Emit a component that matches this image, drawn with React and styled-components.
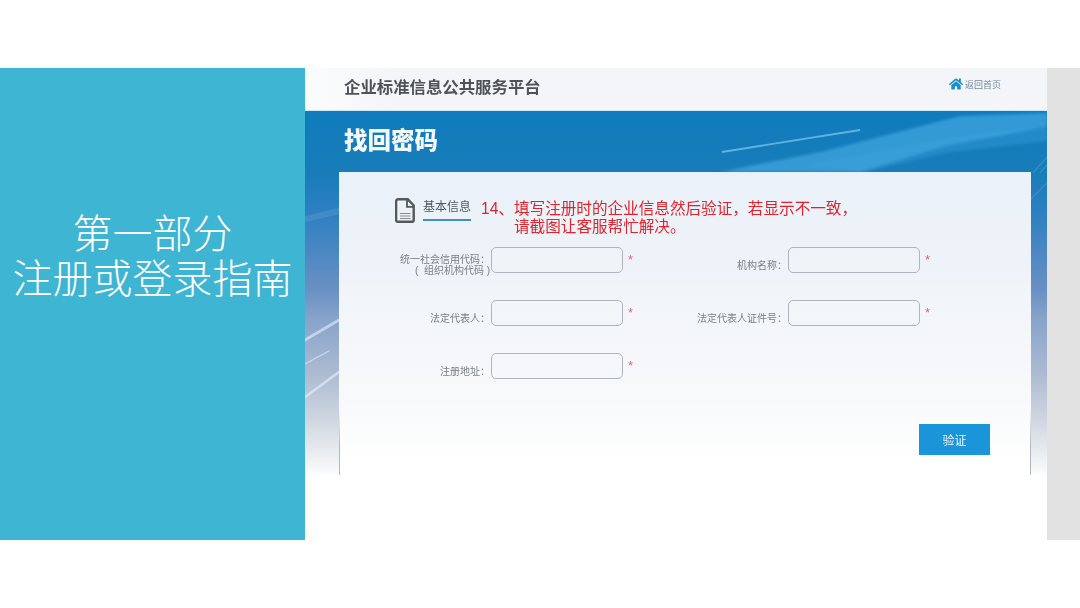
import React from "react";
import styled, { createGlobalStyle } from "styled-components";
import { FaHome } from "react-icons/fa";

const GlobalStyle = createGlobalStyle`
  html, body {
    margin: 0;
    padding: 0;
    background: #fff;
  }
  body {
    font-family: "Liberation Sans", "Noto Sans CJK SC", sans-serif;
  }
`;

const Page = styled.div`
  width: 1080px;
  height: 608px;
  padding-top: 68px;
  box-sizing: border-box;
  overflow: hidden;
  background: #fff;
`;
const Slide = styled.div`
  display: flex;
  height: 472px;
`;
const SidePanel = styled.div`
  width: 305px;
  display: flex;
  flex-direction: column;
  align-items: center;
  justify-content: center;
  padding-bottom: 94px;
  box-sizing: border-box;
  background: #3db5d3;
  color: #fff;
  font-size: 40px;
  font-weight: 300;
  line-height: 45px;
  text-align: center;
  white-space: nowrap;
`;
const Screen = styled.div`
  width: 742px;
  display: flex;
  flex-direction: column;
  filter: blur(0.35px);
`;
const Gutter = styled.div`
  flex: 1;
  background: #e2e2e3;
`;
const TopBar = styled.div`
  height: 43px;
  box-sizing: border-box;
  display: flex;
  align-items: center;
  justify-content: space-between;
  padding: 0 46px 0 39px;
  background: linear-gradient(90deg, #fbfcfd 0, #f3f5f8 12%, #f3f5f8 100%);
  border-bottom: 1px solid #cfe5f1;
`;
const Brand = styled.div`
  font-size: 16.4px;
  font-weight: 700;
  color: #4f5358;
  margin-bottom: 7px;
`;
const HomeLink = styled.div`
  display: flex;
  align-items: center;
  gap: 2px;
  margin-bottom: 10px;
  font-size: 9px;
  color: #6f8a9e;
  svg {
    color: #178fc9;
    font-size: 14px;
  }
`;
const Hero = styled.div`
  position: relative;
  flex: 1;
  display: flex;
  flex-direction: column;
  padding: 0 16px 65px 34px;
  overflow: hidden;
  background: linear-gradient(
    180deg,
    #0f7cbd 0,
    #187cb9 61px,
    #2e80c1 104px,
    #6a90c4 179px,
    #88a4cb 209px,
    #aab9d0 259px,
    #cfd6e0 309px,
    #f4f5f7 355px,
    #fff 366px
  );
`;
const Streaks = styled.svg`
  position: absolute;
  inset: 0;
  width: 742px;
  height: 429px;
`;
const HeroTitle = styled.h1`
  position: relative;
  margin: 0;
  height: 61px;
  padding: 14px 0 0 5px;
  box-sizing: border-box;
  font-size: 23.5px;
  line-height: 33px;
  font-weight: 900;
  color: #f4f8fb;
`;
const Card = styled.div`
  position: relative;
  height: 303px;
  box-sizing: border-box;
  display: flex;
  flex-direction: column;
  border-style: solid;
  border-width: 0 1px;
  border-image: linear-gradient(180deg, transparent 78%, #b4b7bc 90%) 1;
  background: linear-gradient(
    180deg,
    #e4f1f9 0,
    #eaf1f8 2px,
    #eef3f9 90px,
    #f2f5f9 130px,
    #f8f9fb 230px,
    #fff 290px
  );
`;
const Heading = styled.div`
  display: flex;
  align-items: flex-start;
  padding: 26px 0 0 55px;
  height: 75px;
  box-sizing: border-box;
`;
const DocIcon = styled.svg`
  width: 20px;
  height: 25px;
  flex: none;
`;
const SectionName = styled.div`
  width: 48px;
  height: 19px;
  margin: 2px 10px 0 8px;
  border-bottom: 2px solid #3c93c2;
  font-size: 12px;
  line-height: 15px;
  color: #55595e;
  white-space: nowrap;
`;
const Note = styled.div`
  color: #e0242e;
  font-size: 15.6px;
  line-height: 18px;
  margin-top: 2px;
  white-space: nowrap;
`;
const NoteLine = styled.div`
  padding-left: ${(props) => props.$indent || 0}px;
`;
const Form = styled.div`
  display: grid;
  grid-template-columns: 297px 297px;
  row-gap: 27px;
`;
const Field = styled.div`
  display: flex;
  align-items: center;
  height: 26px;
`;
const Label = styled.div`
  width: 150px;
  margin-right: 1px;
  padding-top: 10px;
  text-align: right;
  font-size: 10px;
  line-height: 11px;
  color: #7a7f84;
  white-space: nowrap;
`;
const Input = styled.div`
  width: 132px;
  height: 26px;
  box-sizing: border-box;
  border: 1px solid #b0b5bd;
  border-radius: 5px;
  background: rgba(246, 248, 251, 0.2);
`;
const Star = styled.span`
  margin-left: 5px;
  padding-bottom: 1px;
  font-size: 13px;
  line-height: 13px;
  color: #e8637a;
`;
const Actions = styled.div`
  display: flex;
  justify-content: flex-end;
  padding: 45px 40px 0 0;
`;
const Verify = styled.div`
  width: 71px;
  height: 31px;
  display: flex;
  align-items: center;
  justify-content: center;
  background: #1b95d9;
  color: #eef7fc;
  font-size: 12px;
`;

const fields = [
  { label: ["统一社会信用代码：", "(\u00a0\u00a0组织机构代码\u00a0)"] },
  { label: ["机构名称："] },
  { label: ["法定代表人："] },
  { label: ["法定代表人证件号："] },
  { label: ["注册地址："] },
];

const App = () => {
  return (
    <Page>
      <GlobalStyle />
      <Slide>
        <SidePanel>
          <div>第一部分</div>
          <div>注册或登录指南</div>
        </SidePanel>
        <Screen>
          <TopBar>
            <Brand>企业标准信息公共服务平台</Brand>
            <HomeLink>
              <FaHome />
              返回首页
            </HomeLink>
          </TopBar>
          <Hero>
            <Streaks viewBox="0 0 742 429">
              <defs>
                <filter id="soft" x="-10%" y="-30%" width="120%" height="160%">
                  <feGaussianBlur stdDeviation="1.6" />
                </filter>
              </defs>
              <path
                d="M415 61 L520 40 L655 5 L742 2 L742 16 L640 35 L555 61 Z"
                fill="#4fb4ea"
                opacity=".55"
                filter="url(#soft)"
              />
              <path d="M500 54 L660 24 L742 16 L742 30 L640 42 L560 61 Z" fill="#3fa6e0" opacity=".35" filter="url(#soft)" />
              <path d="M417 41 L555 19" stroke="#7cc4ee" strokeWidth="1.8" opacity=".75" fill="none" />
              <path d="M728 62 L742 46 M735 62 L742 54 M726 88 L742 72" stroke="#a9cdea" strokeWidth="1.2" opacity=".22" fill="none" />
              <g fill="none" stroke="#e6eef7" strokeLinecap="round">
                <path d="M0 229 L34 209" strokeWidth="3" opacity=".6" />
                <path d="M0 253 L24 240" strokeWidth="1.4" opacity=".6" />
                <path d="M0 286 L34 261" strokeWidth="2.6" opacity=".65" />
                <path d="M0 108 L34 100" strokeWidth="6" opacity=".1" />
              </g>
            </Streaks>
            <HeroTitle>找回密码</HeroTitle>
            <Card>
              <Heading>
                <DocIcon viewBox="0 0 20 25">
                  <path
                    d="M3 1.3h9.8l5.9 6.2v14.4a1.9 1.9 0 0 1-1.9 1.9H3a1.9 1.9 0 0 1-1.9-1.9V3.2A1.9 1.9 0 0 1 3 1.3z"
                    fill="#eef2f7"
                    stroke="#55585c"
                    strokeWidth="2.4"
                  />
                  <path d="M12 2v6.8h6.4" fill="none" stroke="#55585c" strokeWidth="1.8" />
                  <path d="M5 15.5h10.5M5 18h10.5M5 20.5h10.5" stroke="#85888d" strokeWidth="1" />
                </DocIcon>
                <SectionName>基本信息</SectionName>
                <Note>
                  <NoteLine>14、填写注册时的企业信息然后验证，若显示不一致，</NoteLine>
                  <NoteLine $indent={33}>请截图让客服帮忙解决。</NoteLine>
                </Note>
              </Heading>
              <Form>
                {fields.map((field) => (
                  <Field key={field.label[0]}>
                    <Label>
                      {field.label.map((line) => (
                        <div key={line}>{line}</div>
                      ))}
                    </Label>
                    <Input />
                    <Star>*</Star>
                  </Field>
                ))}
              </Form>
              <Actions>
                <Verify>验证</Verify>
              </Actions>
            </Card>
          </Hero>
        </Screen>
        <Gutter />
      </Slide>
    </Page>
  );
};

export default App;
